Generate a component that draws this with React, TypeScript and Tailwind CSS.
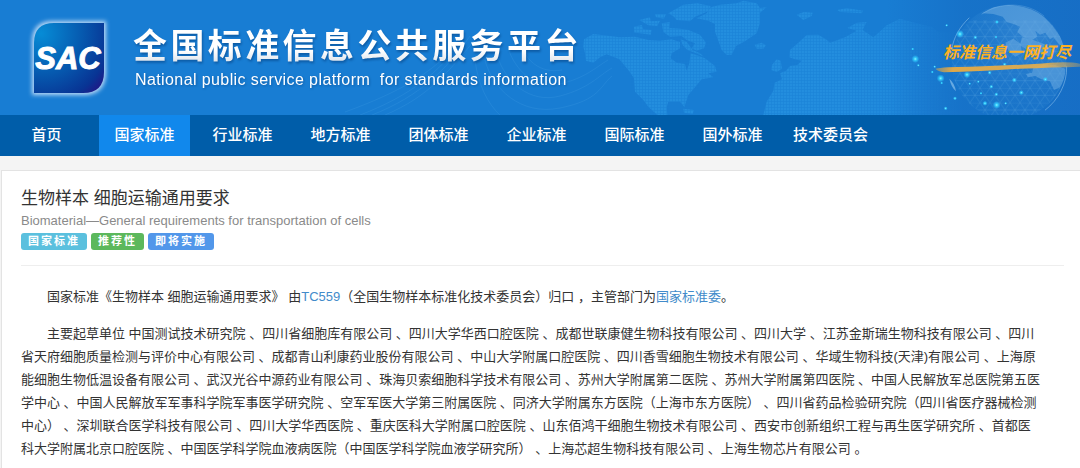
import React from "react";

const navItems = [
  "首页",
  "国家标准",
  "行业标准",
  "地方标准",
  "团体标准",
  "企业标准",
  "国际标准",
  "国外标准",
  "技术委员会",
];

const tags = [
  { label: "国家标准", color: "bg-[#5bc0de]" },
  { label: "推荐性", color: "bg-[#5cb85c]" },
  { label: "即将实施", color: "bg-[#5297ea]" },
];

const drafters = [
  "中国测试技术研究院",
  "四川省细胞库有限公司",
  "四川大学华西口腔医院",
  "成都世联康健生物科技有限公司",
  "四川大学",
  "江苏金斯瑞生物科技有限公司",
  "四川省天府细胞质量检测与评价中心有限公司",
  "成都青山利康药业股份有限公司",
  "中山大学附属口腔医院",
  "四川香雪细胞生物技术有限公司",
  "华域生物科技(天津)有限公司",
  "上海原能细胞生物低温设备有限公司",
  "武汉光谷中源药业有限公司",
  "珠海贝索细胞科学技术有限公司",
  "苏州大学附属第二医院",
  "苏州大学附属第四医院",
  "中国人民解放军总医院第五医学中心",
  "中国人民解放军军事科学院军事医学研究院",
  "空军军医大学第三附属医院",
  "同济大学附属东方医院（上海市东方医院）",
  "四川省药品检验研究院（四川省医疗器械检测中心）",
  "深圳联合医学科技有限公司",
  "四川大学华西医院",
  "重庆医科大学附属口腔医院",
  "山东佰鸿干细胞生物技术有限公司",
  "西安市创新组织工程与再生医学研究所",
  "首都医科大学附属北京口腔医院",
  "中国医学科学院血液病医院（中国医学科学院血液学研究所）",
  "上海芯超生物科技有限公司",
  "上海生物芯片有限公司",
];

const sparks: [number, number, number][] = [
  [286, 177, 8],
  [362, 235, 8],
  [420, 102, 8],
  [441, 224, 7],
  [530, 315, 8],
  [495, 310, 5],
  [278, 147, 3],
  [295, 196, 3],
  [337, 216, 3],
  [344, 200, 3],
  [365, 249, 3],
  [405, 295, 4],
  [377, 325, 4],
  [380, 76, 3],
  [466, 112, 4],
  [528, 111, 3],
  [531, 66, 4],
  [509, 218, 4],
  [583, 240, 5],
  [604, 278, 5],
  [514, 260, 4],
  [475, 245, 3],
  [483, 280, 3],
  [529, 283, 4],
  [557, 310, 3],
  [676, 238, 5],
  [554, 193, 4],
  [449, 251, 3],
];

function BannerArt() {
  return (
    <svg
      aria-hidden="true"
      viewBox="300 0 780 115"
      className="absolute top-0 right-0 h-full w-[780px]"
    >
      <defs>
        <pattern id="dots" width="9" height="9" patternUnits="userSpaceOnUse">
          <rect width="9" height="9" fill="#2293e4" fillOpacity="0.25" />
          <rect width="7" height="7" fill="#3aa9ee" fillOpacity="0.28" />
        </pattern>
        <linearGradient id="east" x1="0" x2="1">
          <stop offset="0" stopColor="#1666be" stopOpacity="0" />
          <stop offset="0.4" stopColor="#1568bf" stopOpacity="0.5" />
          <stop offset="1" stopColor="#1666be" stopOpacity="0.65" />
        </linearGradient>
        <linearGradient id="fade" gradientUnits="userSpaceOnUse" x1="60" x2="420" y1="0" y2="0">
          <stop offset="0" stopColor="#fff" />
          <stop offset="0.4" stopColor="#fff" stopOpacity="0.8" />
          <stop offset="1" stopColor="#fff" stopOpacity="0" />
        </linearGradient>
        <mask id="fadeEast" maskUnits="userSpaceOnUse" x="0" y="0" width="780" height="345">
          <rect width="780" height="345" fill="url(#fade)" />
        </mask>
        <radialGradient id="globe" cx="0.7" cy="0.25" r="0.8">
          <stop offset="0" stopColor="#6fb2ea" stopOpacity="0.3" />
          <stop offset="1" stopColor="#1a7fd2" stopOpacity="0.12" />
        </radialGradient>
        <radialGradient id="spark">
          <stop offset="0" stopColor="#8ff4ff" />
          <stop offset="0.35" stopColor="#35d4ff" stopOpacity="0.9" />
          <stop offset="1" stopColor="#2cc5ff" stopOpacity="0" />
        </radialGradient>
        <pattern id="mesh" width="30" height="44" patternUnits="userSpaceOnUse">
          <path
            d="M0 0L15 22L30 0M0 44L15 22L30 44M0 22H30M0 0H30"
            fill="none"
            stroke="#7fc0ee"
            strokeWidth="1.4"
            strokeOpacity="0.35"
          />
        </pattern>
        <linearGradient id="stroke" x1="0" x2="1">
          <stop offset="0" stopColor="#e7a83c" stopOpacity="0.45" />
          <stop offset="0.12" stopColor="#dfa849" />
          <stop offset="0.75" stopColor="#e5ae4c" stopOpacity="0.9" />
          <stop offset="1" stopColor="#e5ae4c" stopOpacity="0.35" />
        </linearGradient>
        <clipPath id="globeClip">
          <circle cx="567" cy="187" r="172" />
        </clipPath>
      </defs>

      <g fill="none" stroke="#66b5ee" strokeOpacity="0.14">
        <path d="M385 115C430 96 450 70 478 36" />
        <path d="M360 115C410 96 440 72 462 40" />
        <path d="M372 115C420 96 446 70 470 36" />
        <path d="M345 112C400 92 430 74 456 46" />
        <path d="M475 60C478 85 488 104 500 115" />
        <path d="M485 60C492 88 520 116 560 108S600 86 612 76" />
        <path d="M497 55C505 82 530 104 560 96S598 76 612 68" />
        <path d="M508 48C515 70 535 90 560 84S595 68 608 60" />
        <path d="M520 42C525 60 540 74 562 70" />
      </g>

      <g transform="translate(580 0) scale(0.3333)" fill="url(#dots)">
        <path d="M12 118L40 102L120 112L165 110L205 120L240 122L275 118L300 126L300 145L275 160L272 175L290 188L315 192L320 212L328 190L332 160L350 165L375 175L405 198L410 215L385 220L400 232L365 238L345 262L325 285L316 312L314 322L300 305L265 305L260 322L262 345H232L205 320L190 300L165 275L162 235L145 210L118 178L80 163L60 172L40 188L18 182L15 160L10 140Z" />
        <path d="M162 80L185 75L190 88L215 90L212 104L180 100L163 98Z" />
        <path d="M178 60L210 52L212 64L240 62L232 78L205 76Z" />
        <path d="M225 42L258 42L252 56L228 52Z" />
        <path d="M265 40L310 14L352 10L392 18L385 34L345 50L330 64L290 60L282 50Z" />
        <path d="M245 70L270 66L268 84L300 86L325 90L360 104L378 128L372 145L350 152L335 145L345 130L320 120L305 108L270 110L250 96Z" />
        <path d="M302 118L320 125L338 150L360 160L372 170L345 158L322 150L308 135Z" />
        <path d="M350 55L380 40L392 22L420 14L470 10L490 2L530 10L540 24L560 22L540 38L540 70L530 100L495 124L468 138L455 164L440 165L425 150L415 122L405 95L405 72L385 62Z" />
        <path d="M524 134L545 128L558 136L550 146L530 146Z" />
        <path d="M650 44L672 36L698 38L695 48L670 60Z" />
        <path d="M576 195L590 178L602 182L606 206L590 216L574 210Z" />
        <path d="M780 118L750 128L738 118L715 104L680 105L655 128L630 150L628 172L645 178L665 182L652 195L630 198L618 212L600 220L606 238L584 248L580 272L560 305L550 345H780Z" />
        <path d="M310 326L342 330L338 342L312 338Z" />
      </g>

      <g transform="translate(820 0) scale(0.3333)">
        <g fill="url(#dots)" mask="url(#fadeEast)">
          <path d="M60 116L75 112L110 92L82 84L110 68L140 66L128 90L160 112L185 90L200 76L240 56L262 62L300 72L335 80L355 95H420V345H60Z" />
          <path d="M52 30L80 24L130 32L125 40L60 36Z" />
        </g>
        <rect x="200" width="580" height="345" fill="url(#east)" />

        <circle cx="567" cy="187" r="172" fill="url(#globe)" />
        <g clipPath="url(#globeClip)">
          <rect x="395" y="60" width="345" height="285" fill="url(#mesh)" />
          <g fill="#72b0e4" fillOpacity="0.5">
            <path d="M486 40L520 22L570 14L620 20L650 34L672 50L698 78L722 112L732 140L716 132L700 112L690 118L676 98L660 104L646 92L652 110L636 120L610 112L592 96L600 80L580 72L560 66L548 50L520 42Z" />
            <path d="M606 112L640 120L672 132L700 150L690 170L664 160L640 168L622 150L600 136Z" />
            <path d="M640 205L670 192L706 196L736 206L738 232L720 262L702 270L690 244L664 238L646 228L624 232L618 222L636 218Z" />
            <path d="M556 128L580 116L602 132L606 160L586 170L566 154Z" fillOpacity="0.5" />
          </g>
        </g>
        <g fill="none" stroke="#9ccdf2" strokeLinecap="round">
          <path d="M395 150C400 112 420 80 447 54" strokeOpacity="0.5" strokeWidth="3" />
          <path d="M740 200C742 250 715 300 676 330" strokeOpacity="0.5" strokeWidth="3" />
          <path d="M486 42C540 5 620 5 672 48" strokeOpacity="0.25" strokeWidth="3" />
        </g>
        <path d="M388 236Q394 262 408 274Q404 250 388 236Z" fill="#9ccdf2" fillOpacity="0.6" />

        {sparks.map(([x, y, r]) => (
          <circle key={`${x}-${y}`} cx={x} cy={y} r={r * 1.5} fill="url(#spark)" />
        ))}

        <path
          d="M346 206Q370 200 450 200Q600 196 690 188Q750 184 780 191V200Q700 202 600 206Q480 214 372 217Q354 214 346 206Z"
          fill="url(#stroke)"
        />
      </g>
      <text
        x="943"
        y="58"
        fill="#fdb022"
        fontSize="16"
        fontWeight="700"
        fontStyle="italic"
        fontFamily='"Noto Sans CJK SC", sans-serif'
      >
        标准信息一网打尽
      </text>
    </svg>
  );
}

function Logo() {
  return (
    <svg role="img" aria-label="SAC" viewBox="0 0 84 84" className="size-[84px] shrink-0">
      <defs>
        <radialGradient id="logoFill" cx="0.1" cy="0.15" r="1.2">
          <stop offset="0" stopColor="#068cd6" />
          <stop offset="0.5" stopColor="#0658ae" />
          <stop offset="0.82" stopColor="#083494" />
          <stop offset="1" stopColor="#260f82" />
        </radialGradient>
        <filter id="glow" x="-20%" y="-20%" width="140%" height="140%">
          <feGaussianBlur stdDeviation="2" />
        </filter>
      </defs>
      <path
        d="M26 6H78V56Q78 78 56 78H6V26Q6 6 26 6Z"
        fill="#b9d8f5"
        stroke="#b9d8f5"
        strokeWidth="2"
        filter="url(#glow)"
      />
      <path d="M27 7H77V56Q77 77 56 77H7V27Q7 7 27 7Z" fill="url(#logoFill)" />
      <text
        x="41"
        y="53"
        textAnchor="middle"
        fill="#ffffff"
        stroke="#ffffff"
        strokeWidth="1"
        fontSize="31"
        fontWeight="700"
        fontStyle="italic"
        fontFamily='"Liberation Sans", Arial, sans-serif'
      >
        SAC
      </text>
    </svg>
  );
}

export default function App() {
  return (
    <div className="min-h-screen bg-[#f4f4f4] font-['Liberation_Sans','Noto_Sans_CJK_SC',sans-serif] text-[#333]">
      <header>
        <div className="relative flex h-[115px] items-center overflow-hidden bg-[#187dd3] pl-[27px]">
          <BannerArt />
          <div className="relative flex items-center gap-[22px]">
            <Logo />
            <div className="whitespace-nowrap text-white">
              <h1 className="bg-linear-to-b from-white from-60% to-[#cfd8e2] bg-clip-text text-[34px] leading-[44px] font-bold tracking-widest text-transparent drop-shadow-[1px_2px_1px_rgba(0,50,110,0.45)]">
                全国标准信息公共服务平台
              </h1>
              <p className="pl-[2px] text-[16px] leading-6 tracking-wide whitespace-pre drop-shadow-[1px_1px_1px_rgba(0,50,110,0.4)]">
                {"National public service platform  for standards information"}
              </p>
            </div>
          </div>
        </div>
        <nav className="flex h-[41px] gap-[7px] bg-[#005da9] pl-px">
          {navItems.map((item) => (
            <a
              key={item}
              href="#"
              aria-current={item === "国家标准" ? "page" : undefined}
              className={`flex w-[91px] items-center justify-center text-[15px] font-medium whitespace-nowrap text-white ${
                item === "国家标准" ? "bg-[#1188ec]" : ""
              }`}
            >
              {item}
            </a>
          ))}
        </nav>
      </header>

      <main className="mt-[14px] ml-px border border-r-0 border-[#e3e3e3] bg-white pt-4 pr-4 pb-3 pl-[19px]">
        <h2 className="text-[17px] leading-6">生物样本 细胞运输通用要求</h2>
        <p className="text-[13px] leading-5 text-[#8a8a8a]">
          Biomaterial—General requirements for transportation of cells
        </p>
        <ul className="mt-[2px] flex gap-1">
          {tags.map((tag) => (
            <li
              key={tag.label}
              className={`rounded-[3px] px-[7px] text-[11px] leading-[17px] font-bold tracking-[2px] text-white ${tag.color}`}
            >
              {tag.label}
            </li>
          ))}
        </ul>
        <hr className="mt-[15px] border-[#eeeeee]" />
        <div className="mt-[19px] space-y-[14px] pr-[22px] text-[13px] leading-[23px]">
          <p className="indent-[2em]">
            国家标准《生物样本 细胞运输通用要求》 由
            <a href="#" className="text-[#428bca]">TC559</a>
            （全国生物样本标准化技术委员会）归口 ，主管部门为
            <a href="#" className="text-[#428bca]">国家标准委</a>。
          </p>
          <p className="indent-[2em]">{`主要起草单位 ${drafters.join(" 、")} 。`}</p>
        </div>
      </main>
    </div>
  );
}
